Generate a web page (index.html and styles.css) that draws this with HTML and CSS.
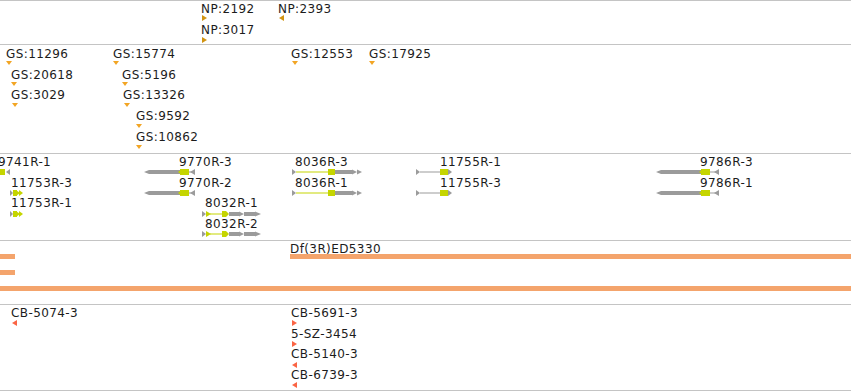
FILE: index.html
```html
<!DOCTYPE html>
<html lang="en">
<head>
    <meta charset="UTF-8">
    <meta name="viewport" content="width=device-width, initial-scale=1.0">
    <title>Feature tracks</title>
    <link rel="stylesheet" href="styles.css">
</head>
<body>
    <div class="panel">
        <div class="track track-np" id="np"></div>
        <div class="track track-gs" id="gs"></div>
        <div class="track track-gene" id="gene"></div>
        <div class="track track-df" id="df"></div>
        <div class="track track-cb" id="cb"></div>
    </div>

    <script>
        const SVG_NS = 'http://www.w3.org/2000/svg';
        const GRAY = '#9b9b9b';
        const GREEN = '#c5d500';
        const NP_COLOR = '#d19412';
        const GS_COLOR = '#f2a524';
        const CB_COLOR = '#fa6444';
        const DF_COLOR = '#f4a46c';

        // ラベル
        function addLabel(track, text, x, y) {
            const s = document.createElement('span');
            s.className = 'lbl';
            s.textContent = text;
            s.style.left = x + 'px';
            s.style.top = y + 'px';
            track.appendChild(s);
        }

        function makeSvg(track) {
            const svg = document.createElementNS(SVG_NS, 'svg');
            svg.setAttribute('class', 'glyphs');
            svg.setAttribute('width', track.clientWidth);
            svg.setAttribute('height', track.clientHeight);
            track.appendChild(svg);
            return svg;
        }

        function shape(svg, pts, fill) {
            const p = document.createElementNS(SVG_NS, 'polygon');
            p.setAttribute('points', pts.map(pt => pt.join(',')).join(' '));
            p.setAttribute('fill', fill);
            svg.appendChild(p);
        }

        function box(svg, x1, x2, y, h, fill) {
            shape(svg, [[x1, y], [x2, y], [x2, y + h], [x1, y + h]], fill);
        }

        // 三角形
        function tri(svg, dir, x, y, fill) {
            if (dir === 'r') shape(svg, [[x, y], [x + 5, y + 3], [x, y + 6]], fill);
            if (dir === 'l') shape(svg, [[x + 5, y], [x, y + 3], [x + 5, y + 6]], fill);
            if (dir === 'd') shape(svg, [[x, y], [x + 6, y], [x + 3, y + 4]], fill);
        }

        // 単純な特徴トラック
        function simpleTrack(id, items, color) {
            const track = document.getElementById(id);
            const svg = makeSvg(track);
            for (const it of items) {
                addLabel(track, it[0], it[1], it[2]);
                tri(svg, it[5], it[3], it[4], color);
            }
        }

        simpleTrack('np', [
            ['NP:2192', 201, 1, 202, 14, 'r'],
            ['NP:3017', 201, 22, 202, 36, 'r'],
            ['NP:2393', 278, 1, 279, 14, 'l']
        ], NP_COLOR);

        simpleTrack('gs', [
            ['GS:11296', 6, 2, 6, 16, 'd'],
            ['GS:20618', 11, 23, 11, 37, 'd'],
            ['GS:3029', 11, 43, 12, 58, 'd'],
            ['GS:15774', 113, 2, 113, 16, 'd'],
            ['GS:5196', 122, 23, 122, 37, 'd'],
            ['GS:13326', 123, 43, 124, 58, 'd'],
            ['GS:9592', 136, 64, 136, 79, 'd'],
            ['GS:10862', 136, 85, 136, 100, 'd'],
            ['GS:12553', 291, 2, 292, 16, 'd'],
            ['GS:17925', 369, 2, 369, 16, 'd']
        ], GS_COLOR);

        simpleTrack('cb', [
            ['CB-5074-3', 11, 1, 12, 15, 'l'],
            ['CB-5691-3', 291, 1, 292, 15, 'r'],
            ['5-SZ-3454', 291, 22, 292, 36, 'r'],
            ['CB-5140-3', 291, 42, 292, 57, 'l'],
            ['CB-6739-3', 291, 63, 292, 77, 'l']
        ], CB_COLOR);

        // 欠失トラック
        (function () {
            const track = document.getElementById('df');
            const svg = makeSvg(track);
            addLabel(track, 'Df(3R)ED5330', 290, 1);
            box(svg, 290, 851, 13, 5, DF_COLOR);
            box(svg, 0, 15, 13, 5, DF_COLOR);
            box(svg, 0, 15, 29, 5, DF_COLOR);
            box(svg, 0, 851, 45, 5, DF_COLOR);
        })();

        // 遺伝子モデル
        function part(svg, p, y) {
            const [kind, a, b, c] = p;
            if (kind === 'cds') box(svg, a, b, y, 6, c);
            if (kind === 'utr') box(svg, a, b, y + 1, 4, c);
            if (kind === 'line') box(svg, a, b, y + 2.5, 1, c);
            if (kind === 'rt') shape(svg, [[a, y], [b, y + 3], [a, y + 6]], c);
            if (kind === 'lt') shape(svg, [[b, y], [a, y + 3], [b, y + 6]], c);
            if (kind === 'rch') shape(svg, [[a, y + 0.5], [b, y + 3], [a, y + 5.5]], c);
            if (kind === 'larrow') shape(svg, [[a, y + 3], [a + 5, y + 1], [b, y + 1], [b, y + 5], [a + 5, y + 5]], c);
        }

        function rev(a, b, end) {
            return [
                ['larrow', a, b, GRAY],
                ['cds', b, b + 9, GREEN],
                ['lt', b - 2, b + 2, GREEN],
                ['line', b + 9, end, GRAY],
                ['lt', end - 5, end, GRAY]
            ];
        }
        const f8036 = [
            ['rt', 292, 296, GRAY], ['line', 296, 328, GREEN], ['cds', 328, 335, GREEN],
            ['utr', 335, 353, GRAY], ['rch', 352, 357, GRAY], ['rch', 357, 362, GRAY]
        ];
        const f11755 = [
            ['rt', 416, 420, GRAY], ['line', 420, 440, GRAY], ['cds', 440, 448, GREEN], ['rt', 448, 452, GRAY]
        ];
        const f11753 = [
            ['rt', 10, 13, GRAY], ['cds', 13, 17, GREEN], ['rt', 16, 20, GREEN], ['rt', 19, 23, GREEN]
        ];
        const f8032 = [
            ['rt', 202, 206, GRAY], ['rt', 206, 211, GREEN], ['line', 210, 222, GREEN],
            ['cds', 222, 226, GREEN], ['rt', 226, 229, GREEN],
            ['utr', 229, 240, GRAY], ['rch', 239, 244, GRAY],
            ['utr', 244, 256, GRAY], ['rch', 255, 261, GRAY]
        ];

        const rows = [15, 36, 57, 77];
        const genes = [
            ['9741R-1', -2, 1, 0, [['cds', 0, 5, GREEN], ['lt', 6, 10, GRAY]]],
            ['9770R-3', 179, 1, 0, rev(144, 180, 195)],
            ['8036R-3', 295, 1, 0, f8036],
            ['11755R-1', 440, 1, 0, f11755],
            ['9786R-3', 700, 1, 0, rev(656, 701, 719)],
            ['11753R-3', 11, 22, 1, f11753],
            ['9770R-2', 179, 22, 1, rev(144, 180, 195)],
            ['8036R-1', 295, 22, 1, f8036],
            ['11755R-3', 440, 22, 1, f11755],
            ['9786R-1', 700, 22, 1, rev(656, 701, 719)],
            ['11753R-1', 11, 42, 2, f11753],
            ['8032R-1', 205, 42, 2, f8032],
            ['8032R-2', 205, 63, 3, f8032]
        ];

        (function () {
            const track = document.getElementById('gene');
            const svg = makeSvg(track);
            for (const g of genes) {
                addLabel(track, g[0], g[1], g[2]);
                for (const p of g[4]) part(svg, p, rows[g[3]]);
            }
        })();
    </script>
</body>
</html>
```

FILE: styles.css
```css
body {
    margin: 0;
    background: #fff;
    font-family: "DejaVu Sans", "Liberation Sans", sans-serif;
    font-size: 12px;
    color: #1c1c1c;
}
.panel {
    width: 851px;
}
.track {
    position: relative;
    border-top: 1px solid #c4c4c4;
    overflow: hidden;
}
.track-np {
    height: 43px;
}
.track-gs {
    height: 108px;
}
.track-gene {
    height: 86px;
}
.track-df {
    height: 63px;
}
.track-cb {
    height: 85px;
    border-bottom: 1px solid #c4c4c4;
}
.lbl {
    position: absolute;
    line-height: 14px;
    letter-spacing: 0.4px;
    white-space: nowrap;
}
.glyphs {
    position: absolute;
    left: 0;
    top: 0;
}
```
